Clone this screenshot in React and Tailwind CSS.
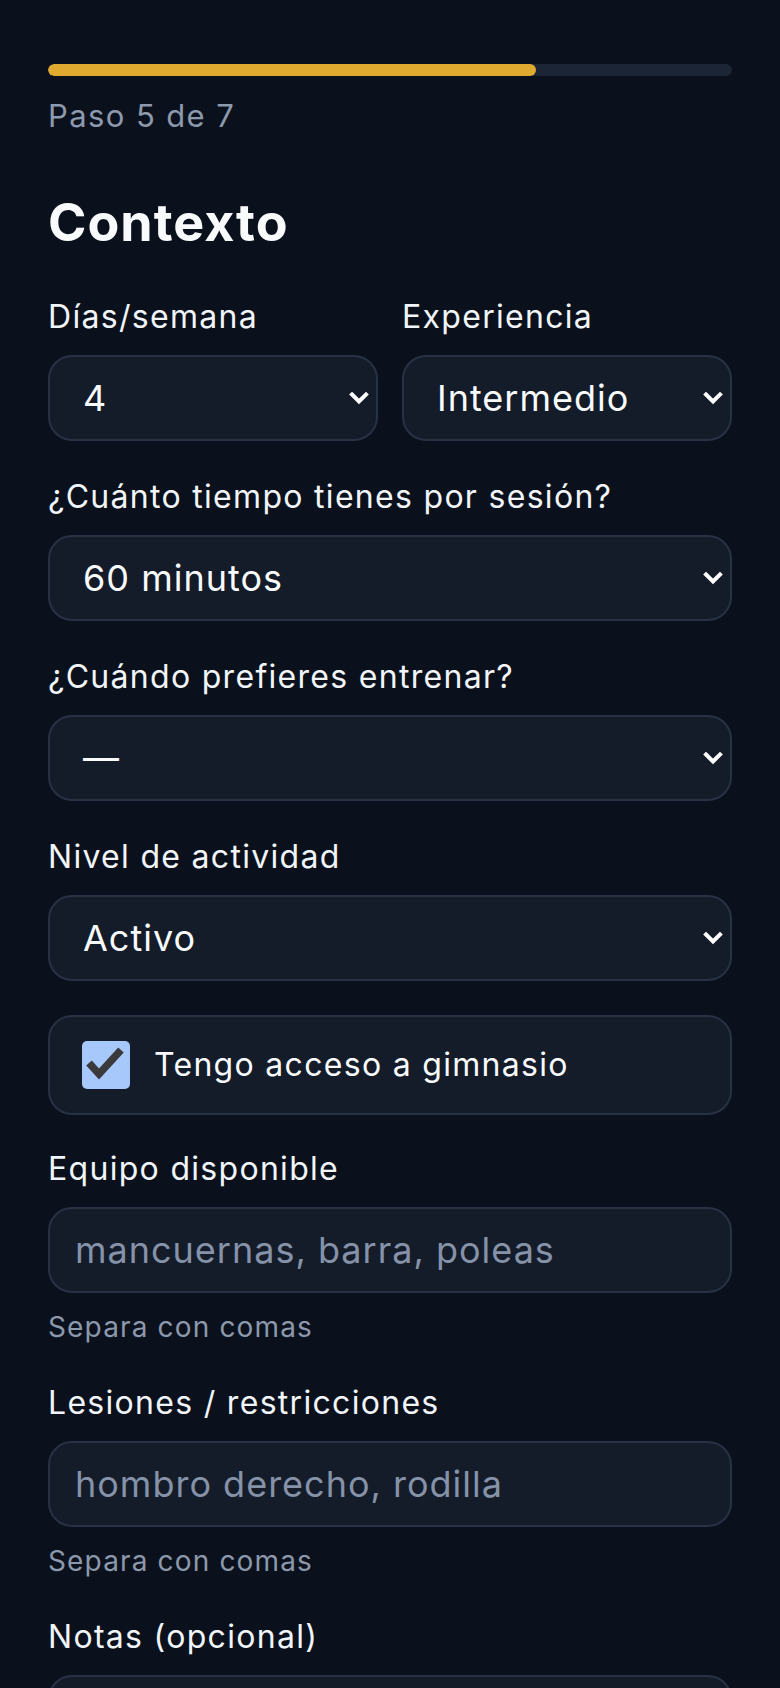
const selectRows = [
  { label: '¿Cuánto tiempo tienes por sesión?', value: '60 minutos' },
  { label: '¿Cuándo prefieres entrenar?', value: '—' },
  { label: 'Nivel de actividad', value: 'Activo' },
];

function Label({ children }) {
  return <div className="text-[32px] leading-[48px] tracking-[1.3px] text-[#f1f5f9]">{children}</div>;
}

function FakeSelect({ value }) {
  return (
    <div className="mt-[14px] flex h-[86px] items-center justify-between rounded-[24px] border-2 border-[#283244] bg-[#141c2a] pl-[33px] pr-[7px]">
      <span className="text-[36px] leading-[44px] tracking-[1px] text-[#f8fafc]">{value}</span>
      <svg width="20" height="14" viewBox="0 0 20 14" fill="none">
        <path d="M3 3.5 L10 10.5 L17 3.5" stroke="#ffffff" strokeWidth="4" strokeLinecap="square" />
      </svg>
    </div>
  );
}

function TextField({ placeholder }) {
  return (
    <div className="mt-[14px] flex h-[86px] items-center rounded-[24px] border-2 border-[#283244] bg-[#141c2a] pl-[25px]">
      <span className="text-[36px] leading-[44px] tracking-[1px] text-[#8592a8]">{placeholder}</span>
    </div>
  );
}

function Helper() {
  return (
    <div className="mt-[14px] text-[28px] leading-[40px] tracking-[1.15px] text-[#8c98ab]">Separa con comas</div>
  );
}

export default function App() {
  return (
    <div className="min-h-[1688px] bg-[#0a111c] px-12 pt-16 font-['Inter',sans-serif]">
      <div className="h-3 w-full overflow-hidden rounded-full bg-[#1c2536]">
        <div className="h-full w-[71.4%] rounded-full bg-[#e0a92f]" />
      </div>
      <div className="mt-5 text-[31px] leading-[40px] tracking-[1.4px] text-[#8d99ac]">Paso 5 de 7</div>

      <h1 className="mt-[57px] text-[52px] font-bold leading-[60px] tracking-[1px] text-[#f8fafc]">Contexto</h1>

      <div className="mt-[40px] grid grid-cols-2 gap-6">
        <div>
          <Label>Días/semana</Label>
          <FakeSelect value="4" />
        </div>
        <div>
          <Label>Experiencia</Label>
          <FakeSelect value="Intermedio" />
        </div>
      </div>

      {selectRows.map((row) => (
        <div key={row.label} className="mt-8">
          <Label>{row.label}</Label>
          <FakeSelect value={row.value} />
        </div>
      ))}

      <div className="mt-[34px] flex h-[100px] items-center gap-6 rounded-[24px] border-2 border-[#283244] bg-[#141c2a] pl-[32px]">
        <div className="h-12 w-12 rounded-[5px] bg-[#a6c8fb]">
          <svg width="48" height="48" viewBox="0 0 48 48" fill="none">
            <path d="M7 22 L17 33 L39 9" stroke="#3a3a3c" strokeWidth="7.5" />
          </svg>
        </div>
        <span className="text-[32px] leading-[48px] tracking-[1.3px] text-[#f8fafc]">Tengo acceso a gimnasio</span>
      </div>

      <div className="mt-[30px]">
        <Label>Equipo disponible</Label>
        <TextField placeholder="mancuernas, barra, poleas" />
        <Helper />
      </div>

      <div className="mt-8">
        <Label>Lesiones / restricciones</Label>
        <TextField placeholder="hombro derecho, rodilla" />
        <Helper />
      </div>

      <div className="mt-8">
        <Label>Notas (opcional)</Label>
        <div className="mt-[14px] h-[160px] rounded-[24px] border-2 border-[#283244] bg-[#141c2a]" />
      </div>
    </div>
  );
}
